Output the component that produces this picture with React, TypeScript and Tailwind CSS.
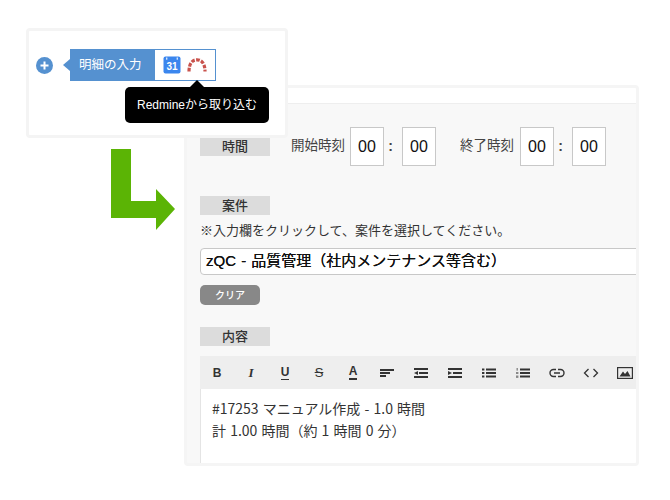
const jp = "font-['Liberation_Sans','Noto_Sans_CJK_JP',sans-serif]";

function SectionLabel({ children }: { children: string }) {
  return (
    <div className="flex h-[19px] w-[70px] shrink-0 items-center justify-center bg-[#dcdcdc] text-[13px] font-medium text-[#333]">
      {children}
    </div>
  );
}

function TimeBox() {
  return (
    <div className="flex h-[39px] w-[34px] shrink-0 items-center justify-center border border-[#c8c8c8] bg-white text-[16px] text-[#111]">
      00
    </div>
  );
}

function Colon() {
  return <span className="w-[18px] pr-[5px] text-center text-[14px] font-bold text-[#444]">:</span>;
}

function Bars({ kind }: { kind: "left" | "out" | "in" | "ul" | "ol" }) {
  const c = "#333";
  return (
    <svg width="16" height="12" viewBox="0 0 16 12">
      {kind === "left" && (
        <>
          <rect x="1" y="2" width="14" height="2" fill={c} />
          <rect x="1" y="5" width="10" height="2" fill={c} />
          <rect x="1" y="8" width="6" height="2" fill={c} />
        </>
      )}
      {kind === "out" && (
        <>
          <rect x="1" y="1" width="14" height="2" fill={c} />
          <rect x="6" y="5" width="9" height="2" fill={c} />
          <rect x="1" y="9" width="14" height="2" fill={c} />
          <path d="M1 6 L5 4 V8 Z" fill={c} />
        </>
      )}
      {kind === "in" && (
        <>
          <rect x="1" y="1" width="14" height="2" fill={c} />
          <rect x="6" y="5" width="9" height="2" fill={c} />
          <rect x="1" y="9" width="14" height="2" fill={c} />
          <path d="M5 6 L1 4 V8 Z" fill={c} />
        </>
      )}
      {kind === "ul" && (
        <>
          <rect x="1" y="1.5" width="2.4" height="2" fill={c} />
          <rect x="1" y="5" width="2.4" height="2" fill={c} />
          <rect x="1" y="8.5" width="2.4" height="2" fill={c} />
          <rect x="5" y="1.5" width="10" height="2" fill={c} />
          <rect x="5" y="5" width="10" height="2" fill={c} />
          <rect x="5" y="8.5" width="10" height="2" fill={c} />
        </>
      )}
      {kind === "ol" && (
        <>
          <rect x="1.5" y="1" width="1.4" height="2.6" fill="#888" />
          <rect x="1" y="5" width="2.4" height="2" fill="#888" />
          <rect x="1" y="8.5" width="2.4" height="2.4" fill="#888" />
          <rect x="5" y="1.5" width="10" height="2" fill={c} />
          <rect x="5" y="5" width="10" height="2" fill={c} />
          <rect x="5" y="8.5" width="10" height="2" fill={c} />
        </>
      )}
    </svg>
  );
}

function ToolCell({ children }: { children: React.ReactNode }) {
  return <div className="flex h-full w-[34px] shrink-0 items-center justify-center text-[#333]">{children}</div>;
}

function Toolbar() {
  const letter = "text-[12px] leading-none font-bold font-['Liberation_Sans',sans-serif]";
  return (
    <div className="flex h-[33px] w-[437px] shrink-0 bg-[#eeeeee]">
      <ToolCell><span className={letter}>B</span></ToolCell>
      <ToolCell><span className="text-[13px] leading-none font-bold italic font-['Liberation_Serif',serif]">I</span></ToolCell>
      <ToolCell><span className={letter + " border-b-[1.5px] border-[#333] pb-[1px]"}>U</span></ToolCell>
      <ToolCell><span className="text-[13px] leading-none font-['Liberation_Sans',sans-serif] line-through">S</span></ToolCell>
      <ToolCell><span className={letter + " border-b-2 border-[#333] pb-[1px]"}>A</span></ToolCell>
      <ToolCell><Bars kind="left" /></ToolCell>
      <ToolCell><Bars kind="out" /></ToolCell>
      <ToolCell><Bars kind="in" /></ToolCell>
      <ToolCell><Bars kind="ul" /></ToolCell>
      <ToolCell><Bars kind="ol" /></ToolCell>
      <ToolCell>
        <svg width="16" height="10" viewBox="0 0 16 10" fill="none" stroke="#333" strokeWidth="1.4">
          <path d="M7 1.5 H4.5 a3.5 3.5 0 0 0 0 7 H7" />
          <path d="M9 1.5 h2.5 a3.5 3.5 0 0 1 0 7 H9" />
          <path d="M5 5 H11" />
        </svg>
      </ToolCell>
      <ToolCell>
        <svg width="16" height="10" viewBox="0 0 16 10" fill="none" stroke="#333" strokeWidth="1.3">
          <path d="M5.5 1 L1.5 5 L5.5 9" />
          <path d="M10.5 1 L14.5 5 L10.5 9" />
        </svg>
      </ToolCell>
      <ToolCell>
        <svg width="16" height="12" viewBox="0 0 16 12">
          <rect x="0.6" y="0.6" width="14.8" height="10.8" fill="none" stroke="#333" strokeWidth="1.2" />
          <path d="M2.5 9.5 L6 4.5 L8 7 L10.5 4 L13.5 9.5 Z" fill="#333" />
        </svg>
      </ToolCell>
    </div>
  );
}

function FormPanel() {
  return (
    <div className="absolute left-[184px] top-[85px] flex h-[381px] w-[455px] flex-col overflow-hidden rounded-[4px] border-[3px] border-[#f5f5f5] bg-[#f8f8f8]">
      <div className="h-[16px] shrink-0 border-b border-[#eeeeee] bg-white" />
      <div className="flex min-h-0 flex-1 flex-col pl-[13px]">
        <div className="mt-[23px] flex h-[39px] shrink-0 items-center text-[13.5px] text-[#444]">
          <SectionLabel>時間</SectionLabel>
          <span className="ml-[21px] w-[59px] whitespace-nowrap">開始時刻</span>
          <TimeBox />
          <Colon />
          <TimeBox />
          <span className="ml-[24px] w-[60px] whitespace-nowrap">終了時刻</span>
          <TimeBox />
          <Colon />
          <TimeBox />
        </div>
        <div className="mt-[30px] shrink-0"><SectionLabel>案件</SectionLabel></div>
        <div className="mt-[6px] h-[20px] shrink-0 text-[13px] leading-[20px] whitespace-nowrap text-[#333]">
          ※入力欄をクリックして、案件を選択してください。
        </div>
        <div className="mt-[7px] flex h-[27px] w-[445px] shrink-0 items-center rounded-[4px] border border-[#c8c8c8] bg-white pl-[5px] text-[15px] whitespace-nowrap text-[#111] [text-shadow:0_0_0.5px_#111] [word-spacing:1px]">
          zQC - 品質管理（社内メンテナンス等含む）
        </div>
        <div className="mt-[10px] flex h-[20px] w-[60px] shrink-0 items-center justify-center rounded-[5px] bg-[#888888] text-[10px] font-medium text-white">
          クリア
        </div>
        <div className="mt-[22px] shrink-0"><SectionLabel>内容</SectionLabel></div>
        <div className="mt-[10px] shrink-0"><Toolbar /></div>
        <div className="min-h-0 w-[437px] flex-1 border-l border-[#e4e4e4] bg-white pl-[11px] pt-[8px] font-['Noto_Sans_CJK_JP',sans-serif] text-[14px] leading-[22px] whitespace-nowrap text-[#333] [word-spacing:1px]">
          <div>#17253 マニュアル作成 - 1.0 時間</div>
          <div>計 1.00 時間（約 1 時間 0 分）</div>
        </div>
      </div>
    </div>
  );
}

function GreenArrow() {
  return (
    <svg className="absolute left-[111px] top-[149px]" width="64" height="81" viewBox="0 0 64 81">
      <path d="M0 0 H20 V52 H45 V40 L64 60 L45 81 V69 H0 Z" fill="#5bb405" />
    </svg>
  );
}

function ImportCard() {
  return (
    <div className="absolute left-[26px] top-[28px] h-[110px] w-[262px] rounded-[4px] border-[3px] border-[#f4f4f4] bg-white">
      <div className="mt-[18px] flex h-[32px] items-center pl-[7px]">
        <div className="flex h-[17px] w-[17px] items-center justify-center rounded-full bg-[#5591d0]">
          <svg width="9" height="9" viewBox="0 0 9 9"><path d="M3.5 0.5 H5.5 V3.5 H8.5 V5.5 H5.5 V8.5 H3.5 V5.5 H0.5 V3.5 H3.5 Z" fill="#fff" /></svg>
        </div>
        <div className="ml-[10px] h-0 w-0 border-y-[6px] border-r-[7px] border-y-transparent border-r-[#5591d0]" />
        <div className="flex h-full w-[84px] items-center bg-[#5591d0] pl-[9px] text-[12.5px] whitespace-nowrap text-white">
          明細の入力
        </div>
        <div className="flex h-full w-[62px] items-center border border-[#5591d0] bg-white pl-[8px]">
          <svg width="18" height="18" viewBox="0 0 18 18">
            <rect x="0.5" y="0.5" width="17" height="17" rx="2" fill="#3b86ee" />
            <rect x="3" y="1.5" width="1.4" height="2.2" fill="#d5e5fb" />
            <rect x="13.6" y="1.5" width="1.4" height="2.2" fill="#d5e5fb" />
            <text x="9" y="13.8" textAnchor="middle" fontSize="10" fontWeight="700" fill="#fff" fontFamily="Liberation Sans, sans-serif">31</text>
          </svg>
          <svg className="ml-[6px]" width="20" height="14" viewBox="0 0 20 14">
            <path d="M2 13.5 C2 6 5 1.8 10 1.8 C15 1.8 18 6 18 13.5" fill="none" stroke="#c9524c" strokeWidth="3.2" strokeDasharray="3.6 1.4" />
          </svg>
        </div>
      </div>
    </div>
  );
}

function Tooltip() {
  return (
    <div className="absolute left-[125px] top-[87px] flex h-[36px] w-[144px] items-center justify-center rounded-[5px] bg-black text-[12px] whitespace-nowrap text-white">
      <div className="absolute left-[65px] top-[-7px] h-0 w-0 border-x-[7px] border-b-[7px] border-x-transparent border-b-black" />
      Redmineから取り込む
    </div>
  );
}

export default function App() {
  return (
    <div className={"relative h-[500px] w-[670px] overflow-hidden bg-white " + jp}>
      <FormPanel />
      <GreenArrow />
      <ImportCard />
      <Tooltip />
    </div>
  );
}
